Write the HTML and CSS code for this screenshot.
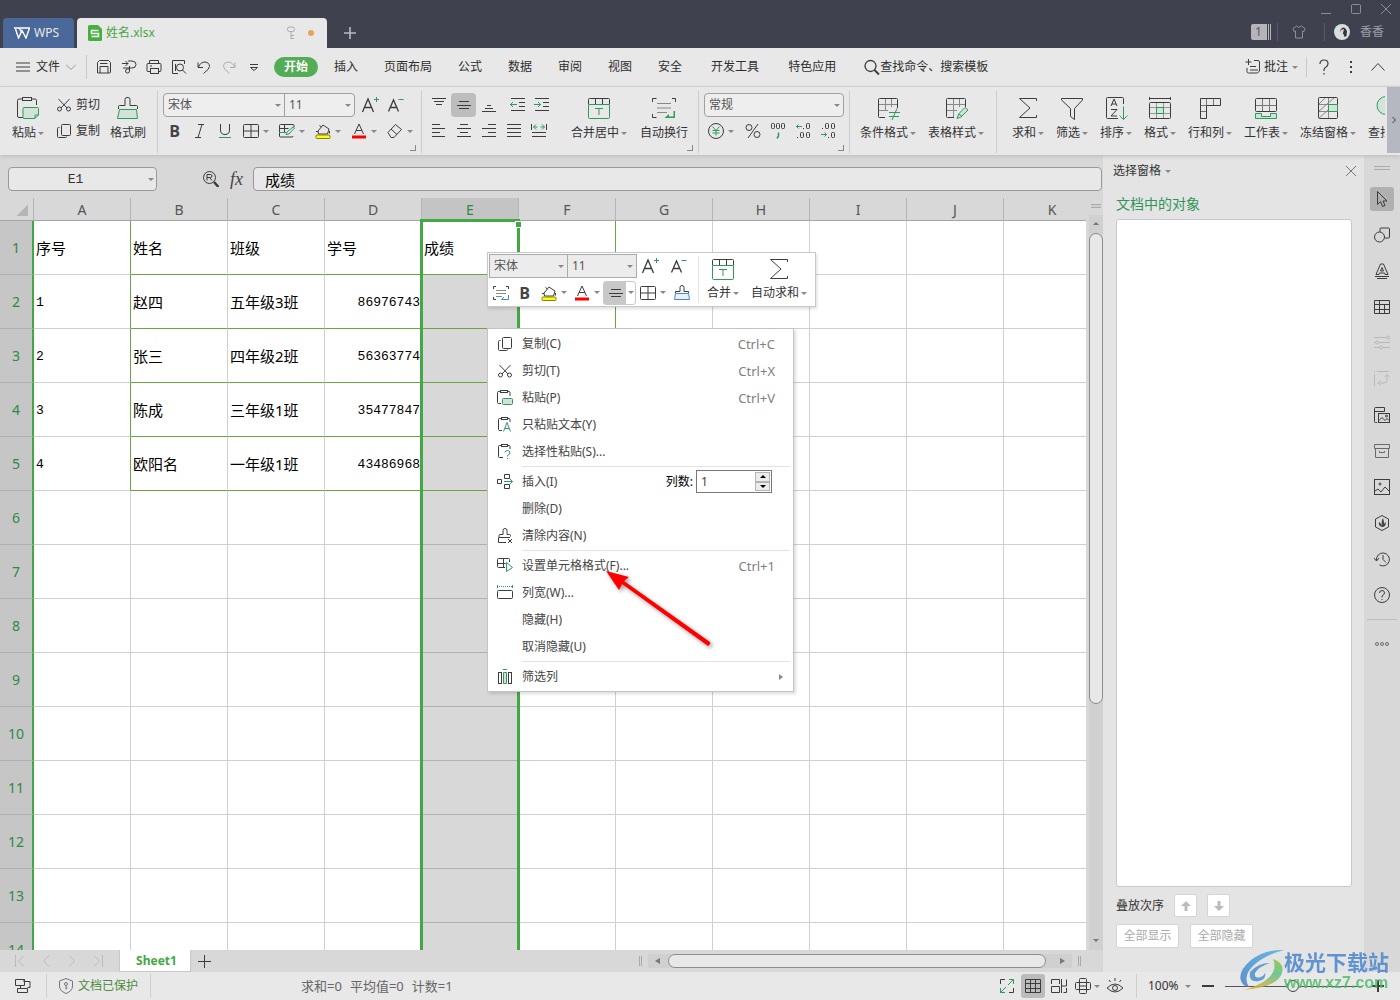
FILE: index.html
```html
<!DOCTYPE html>
<html lang="zh-CN">
<head>
<meta charset="utf-8">
<title>姓名.xlsx - WPS</title>
<link rel="stylesheet" href="styles.css">
</head>
<body>
<svg class="sprite" aria-hidden="true">
  <symbol id="cut" viewBox="0 0 16 16"><path d="M2.500 2l8.500 9M13.500 2L5 11"/><circle cx="3.500" cy="12" r="2"/><circle cx="12.500" cy="12" r="2"/></symbol>
  <symbol id="copy" viewBox="0 0 16 16"><rect x="5.500" y="1.500" width="9" height="11" rx="1"/><path d="M3.500 4.500h-1q-1 0-1 1v8q0 1 1 1h7q1 0 1-1"/></symbol>
  <symbol id="borders" viewBox="0 0 16 16"><rect x=".5" y="1.500" width="15" height="13" rx="1"/><path d="M8 1.500v13M.5 8h15"/></symbol>
  <symbol id="bucket" viewBox="0 0 16 16"><path d="M3 8l5-6 6 4-1.500 5h-9zM1 8.500h2M4.500 2.500l2 1.500M14.500 8v2.500"/><rect x="1" y="12" width="14" height="3.500" rx="1" fill="#ff0" stroke="#887f22"/></symbol>
  <symbol id="fontcolor" viewBox="0 0 16 16"><path d="M3.500 11L8 1l4.500 10M5 7.500h6"/><path d="M1 14h14" stroke="#f00" stroke-width="3"/></symbol>
  <symbol id="grow" viewBox="0 0 18 18"><path d="M1.500 16L7 3l5.500 13M3.500 11.500h7" stroke-width="1.300"/><path class="g" d="M15.500 1v5M13 3.500h5"/></symbol>
  <symbol id="shrink" viewBox="0 0 18 18"><path d="M2.500 15.500L7.500 4l5 11.500M4 11.500h7" stroke-width="1.300"/><path class="g" d="M12.500 3.500h5"/></symbol>
  <symbol id="merge" viewBox="0 0 24 24"><path d="M1.500 8V3.500q0-1 1-1h19q1 0 1 1V8M8.500 3v5M15.500 3v5"/><path class="g" d="M1.500 8.500v13q0 1 1 1h19q1 0 1-1v-13zM8 12.500h8M12 12.500v6.500"/></symbol>
  <symbol id="wrap" viewBox="0 0 24 24"><path d="M.5 6V2.500h4M20 2.500h3.500V6M.5 18v3.500h4"/><path d="M5 7.500h14M5 12h14M5 16.500h10" stroke="#888"/><path class="gs" d="M21.500 15h1.500v7H12.500l4.500-4v2.500h4.500z"/></symbol>
  <symbol id="sigma" viewBox="0 0 24 24"><path d="M20.500 5V2.500h-17L14 12 3.500 21.500h17V19"/></symbol>
  <symbol id="brush" viewBox="0 0 24 24"><path d="M2.500 13V10.500q0-1 1-1H9v-6q0-2 2-2h1q2 0 2 2v6h6.500q1 0 1 1V13"/><path class="gf" d="M3.500 13.500h17l1 9h-20z"/></symbol>
  <symbol id="more" viewBox="0 0 16 16"><circle cx="3" cy="8" r="1.500"/><circle cx="8" cy="8" r="1.500"/><circle cx="13" cy="8" r="1.500"/></symbol>
</svg>
<div class="app">

<header class="titlebar">
  <button class="wps-tab"><svg width="16" height="12" viewBox="0 0 16 12"><path d="M0 1h15.500L12 11 8 3.500 4.500 11 1.500 2M5 1l3 5" stroke="#fff" stroke-width="1.400"/></svg>WPS</button>
  <div class="doc-tab">
    <svg width="14" height="16" viewBox="0 0 14 16"><path d="M1.500 0H10l4 4v10.500q0 1.500-1.500 1.500h-11Q0 16 0 14.500v-13Q0 0 1.500 0z" fill="#45b03f" stroke="none"/><path d="M10.500 5.500h-7v3h7v3h-7" stroke="#fff" stroke-width="1.500"/></svg>
    <span class="doc-name">姓名.xlsx</span>
    <svg class="key" width="10" height="14" viewBox="0 0 10 14"><rect x="1.500" y="1" width="7" height="4.500" rx="2"/><path d="M5 5.500V13M5 9.500h3M5 12.500h3"/></svg>
    <span class="unsaved"></span>
  </div>
  <button class="new-tab" aria-label="新建"><svg width="12" height="12" viewBox="0 0 12 12"><path d="M6 0v12M0 6h12" stroke="#bbb" stroke-width="1.600"/></svg></button>
  <div class="title-right">
    <div class="win-controls">
      <button aria-label="最小化"><svg width="10" height="10"><path d="M0 9.500h10"/></svg></button>
      <button aria-label="最大化"><svg width="10" height="10"><rect x=".5" y=".5" width="9" height="9" rx="1"/></svg></button>
      <button aria-label="关闭"><svg width="10" height="10"><path d="M0 0l10 10M10 0L0 10"/></svg></button>
    </div>
    <div class="user-row">
      <span class="badge">1</span>
      <button class="skin" aria-label="皮肤"><svg width="14" height="14" viewBox="0 0 14 14"><path d="M4.500 1L1 3.500 2 6.500l1.500-.5v7h7V6l1.500.5 1-3L9.500 1Q7 4 4.500 1z"/></svg></button>
      <svg class="avatar" width="16" height="16" viewBox="0 0 16 16"><circle cx="8" cy="8" r="8" fill="#d5dfe3" stroke="none"/><path d="M6 7q2-5 5-3l2 3-.5 5-2 1-1-3z" fill="#3c3136" stroke="none"/><path d="M7 6l3-1-1 4H6z" fill="#f1d3c5" stroke="none"/></svg>
      <span>香香</span>
    </div>
  </div>
</header>

<nav class="menubar">
  <button class="file"><svg width="14" height="10"><path d="M0 1h14M0 5h14M0 9h14"/></svg>文件<svg width="10" height="6" class="soft"><path d="M0 .5l5 5 5-5"/></svg></button>
  <div class="quick">
    <button aria-label="保存"><svg width="16" height="16"><path d="M1.500 14V3.500l2-2h9l2 2V13q0 1-1 1h-11q-1 0-1-1zM4 4.500h7.500M4 14V7.500h8V14"/></svg></button>
    <button aria-label="输出PDF"><svg width="16" height="16"><path d="M1 4.500h6M4.500 2L7 4.500 4.500 7M7 2h4q4 0 4 3.500T11 9H2M8.500 7v5q0 2-2 2t-2-2 2-2h2"/></svg></button>
    <button aria-label="打印"><svg width="16" height="16"><path d="M3.500 4.500v-3h9v3M4 12.500H2q-1 0-1-1v-6q0-1 1-1h12q1 0 1 1v6q0 1-1 1h-2"/><rect x="4.500" y="9.500" width="8" height="5"/><path d="M4 7h2"/></svg></button>
    <button aria-label="打印预览"><svg width="16" height="16"><path d="M7 14.500H1.500v-13h12V5"/><circle cx="9" cy="8.500" r="3.500"/><path d="M11.500 11l3.500 3.500M4.500 5v7"/></svg></button>
    <button aria-label="撤销"><svg width="16" height="16"><path d="M2 3.500v5h5M2.500 8q2-5 6.500-5 4.500.5 4.500 4.500 0 2.500-6 7"/></svg></button>
    <button class="faint" aria-label="恢复"><svg width="16" height="16"><path d="M14 3.500v5H9M13.500 8q-2-5-6.500-5-4.500.5-4.500 4.500 0 2.500 6 7"/></svg></button>
    <button aria-label="更多"><svg width="16" height="16"><path d="M4 5.500h8M4.500 8.500l3.500 3 3.500-3z"/></svg></button>
  </div>
  <div class="tabs">
    <button class="on">开始</button><button>插入</button><button>页面布局</button><button>公式</button><button>数据</button><button>审阅</button><button>视图</button><button>安全</button><button class="wide">开发工具</button><button class="wide">特色应用</button>
  </div>
  <button class="search"><svg width="16" height="16"><circle cx="6.500" cy="7" r="5.500" stroke-width="1.300"/><path d="M10.500 11l4.500 4.500" stroke-width="2"/></svg>查找命令、搜索模板</button>
  <div class="menu-right">
    <button class="comment"><svg width="16" height="16"><path d="M3.500 0v6M.5 3h6M9 1.500h4q1.500 0 1.500 1.500v9l-2 2h-9q-1.500 0-1.500-1.500V9M5 7.500h6M5 11h8"/></svg>批注<i class="caret"></i></button>
    <button class="ic" aria-label="帮助"><svg width="12" height="16"><path d="M2 5q0-4 4-4t4 3.500Q10 7 8 8T6 11v1M6 14v1.500" stroke-width="1.200"/></svg></button>
    <button class="ic" aria-label="选项"><svg width="4" height="14"><path d="M2 1v2M2 6v2M2 11v2" stroke-width="2"/></svg></button>
    <button class="ic" aria-label="折叠"><svg width="14" height="8"><path d="M.5 7.500l6.500-7 6.500 7"/></svg></button>
  </div>
</nav>

<section class="ribbon">
  <div class="group g-clip">
    <button class="big"><svg width="24" height="24"><path d="M7 21.500H3q-1.500 0-1.500-1.500V4.500Q1.500 3 3 3h3M16 3h3q1.500 0 1.500 1.500V9"/><rect x="6.500" y="1.500" width="9" height="3"/><path class="gf" d="M8 11.500h13.500q1 0 1 1V19l-3.500 3.500H8q-1 0-1-1v-9q0-1 1-1zM19 22v-3h3"/></svg><span>粘贴<i class="caret"></i></span></button>
    <div class="stack">
      <button class="lbl"><svg width="16" height="16"><use href="#cut"/></svg>剪切</button>
      <button class="lbl"><svg width="16" height="16"><use href="#copy"/></svg>复制</button>
    </div>
    <button class="big"><svg width="24" height="24"><use href="#brush"/></svg><span>格式刷</span></button>
  </div>
  <div class="group g-font launch">
    <div class="line">
      <div class="combo">
        <label class="pick w-font"><select aria-label="字体"><option>宋体</option></select><i class="caret"></i></label>
        <label class="pick w-size"><select aria-label="字号"><option>11</option></select><i class="caret"></i></label>
      </div>
      <button class="ib ga" aria-label="增大字号"><svg width="18" height="18"><use href="#grow"/></svg></button>
      <button class="ib" aria-label="减小字号"><svg width="18" height="18"><use href="#shrink"/></svg></button>
    </div>
    <div class="line">
      <button class="ib bold">B</button><button class="ib" aria-label="斜体"><svg width="12" height="14"><path d="M4 .5h6M1 13.500h6M8 .5l-4 13"/></svg></button><button class="ib" aria-label="下划线"><svg width="14" height="16"><path d="M2.500 1v6q0 4.500 4.500 4.500T11.500 7V1"/><path class="g" d="M1 14.500h12"/></svg></button>
      <button class="split first" aria-label="边框"><svg width="16" height="16"><use href="#borders"/></svg><i class="caret"></i></button>
      <button class="split" aria-label="单元格样式"><svg width="16" height="16"><path d="M15 4V2.500q0-1-1-1H1.500q-1 0-1 1V13q0 1 1 1H13q1 0 1-1M.5 5.500h9M5.500 2v8"/><path class="g" d="M0 9.500h7M15.500 5L10 11l-3 .5L8 9l6-5z"/></svg><i class="caret"></i></button>
      <button class="split" aria-label="填充颜色"><svg width="16" height="16"><use href="#bucket"/></svg><i class="caret"></i></button>
      <button class="split" aria-label="字体颜色"><svg width="16" height="16"><use href="#fontcolor"/></svg><i class="caret"></i></button>
      <button class="split" aria-label="清除"><svg width="16" height="16"><path d="M1 9.500l7.500-8 6 5-7.500 8H4zM4 6l6 5.500"/></svg><i class="caret"></i></button>
    </div>
  </div>
  <div class="group g-align launch">
    <div class="stack">
      <div class="line">
        <button class="ib" aria-label="顶端对齐"><svg width="16" height="16"><path d="M1 1.500h14M3 4.500h10M5 7.500h6"/></svg></button>
        <button class="ib on" aria-label="垂直居中"><svg width="16" height="16"><path d="M3 4.500h10M1 8.500h14M3 11.500h10"/></svg></button>
        <button class="ib" aria-label="底端对齐"><svg width="16" height="16"><path d="M6 8.500h4M4 11.500h8M1 14.500h14"/></svg></button>
        <button class="ib wide" aria-label="减少缩进"><svg width="16" height="16"><path d="M2 1.500h14M10 5.500h6M10 9.500h6M2 13.500h14"/><path class="g" d="M1 7.500h7M4 5L1.500 7.500 4 10"/></svg></button>
        <button class="ib" aria-label="增加缩进"><svg width="16" height="16"><path d="M1 1.500h14M9 5.500h6M9 9.500h6M1 13.500h14"/><path class="g" d="M0 7.500h6.500M4 5l2.500 2.500L4 10"/></svg></button>
      </div>
      <div class="line">
        <button class="ib" aria-label="左对齐"><svg width="16" height="16"><path d="M1 1.500h8M1 5.500h13M1 9.500h8M1 13.500h13"/></svg></button>
        <button class="ib" aria-label="居中"><svg width="16" height="16"><path d="M4 1.500h8M1 5.500h14M4 9.500h8M1 13.500h14"/></svg></button>
        <button class="ib" aria-label="右对齐"><svg width="16" height="16"><path d="M7 1.500h8M1 5.500h14M7 9.500h8M1 13.500h14"/></svg></button>
        <button class="ib" aria-label="两端对齐"><svg width="16" height="16"><path d="M1 1.500h14M1 5.500h14M1 9.500h14M1 13.500h14"/></svg></button>
        <button class="ib" aria-label="分散对齐"><svg width="16" height="16"><path d="M.5 1v6M15.500 1v6M1 9.500h14M1 13.500h14"/><path class="g" d="M2.500 4h4M9.500 4h4M5 1.500L2.500 4 5 6.500M11 1.500L13.500 4 11 6.500"/></svg></button>
      </div>
    </div>
    <button class="big"><svg width="24" height="24"><use href="#merge"/></svg><span>合并居中<i class="caret"></i></span></button>
    <button class="big"><svg width="24" height="24"><use href="#wrap"/></svg><span>自动换行</span></button>
  </div>
  <div class="group g-num launch">
    <div class="line"><div class="combo"><label class="pick w-num"><select aria-label="数字格式"><option>常规</option></select><i class="caret"></i></label></div></div>
    <div class="line">
      <button class="split" aria-label="货币"><svg width="16" height="16"><circle cx="8" cy="8" r="7.500"/><path class="g" d="M4.500 3.500L8 7.500l3.500-4M8 7.500v5M4.500 7.500h7M4.500 10h7"/></svg><i class="caret"></i></button>
      <button class="ib" aria-label="百分比"><svg width="16" height="16"><circle cx="4" cy="4.500" r="3"/><circle cx="12" cy="11.500" r="3"/><path d="M13 1L3 15"/></svg></button>
      <button class="ib" aria-label="千位分隔"><svg width="16" height="16"><rect x="1.500" y=".5" width="3" height="5" rx="1"/><rect x="6.500" y=".5" width="3" height="5" rx="1"/><rect x="11.500" y=".5" width="3" height="5" rx="1"/><path class="g" d="M8.500 9.500v3.500L7 15.500" stroke-width="1.500"/></svg></button>
      <button class="ib" aria-label="增加小数"><svg width="16" height="16"><rect x="11.500" y=".5" width="3" height="5" rx="1"/><rect x="5.500" y="9.500" width="3" height="5" rx="1"/><rect x="11.500" y="9.500" width="3" height="5" rx="1"/><path d="M8 5.500h1M2 14.500h1"/><path class="g" d="M1 3.500h6M3.500 1.500l-2 2 2 2"/></svg></button>
      <button class="ib" aria-label="减少小数"><svg width="16" height="16"><rect x="5.500" y=".5" width="3" height="5" rx="1"/><rect x="11.500" y=".5" width="3" height="5" rx="1"/><rect x="11.500" y="9.500" width="3" height="5" rx="1"/><path d="M2 5.500h1M8 14.500h1"/><path class="g" d="M1 11.500h6M4.500 9.500l2 2-2 2"/></svg></button>
    </div>
  </div>
  <div class="group g-style">
    <button class="big"><svg width="24" height="24"><path d="M9 21.500H3.500q-1 0-1-1v-17q0-1 1-1h17q1 0 1 1V12"/><path d="M3 8.500h18M3 14.500h9M9.500 3v11.500M15.500 3v8" stroke="#888"/><path class="g" d="M13 16.500h11M13 20.500h10M21 12.500L16 24"/></svg><span>条件格式<i class="caret"></i></span></button>
    <button class="big"><svg width="24" height="24"><path d="M10 21.500H3.500q-1 0-1-1v-17q0-1 1-1h17q1 0 1 1V11"/><path d="M3 8.500h18M3 14.500h10M9.500 3v18M15.500 3v8" stroke="#888"/><path class="gf" d="M13 22.500l2-5 6-6 3 2.500-7 7zM15 18l3 2.500"/></svg><span>表格样式<i class="caret"></i></span></button>
  </div>
  <div class="group g-edit">
    <button class="big"><svg width="24" height="24"><use href="#sigma"/></svg><span>求和<i class="caret"></i></span></button>
    <button class="big"><svg width="24" height="24"><path d="M1.500 2.500h21V4l-8 8.500v11l-4-3v-8L1.500 4z"/></svg><span>筛选<i class="caret"></i></span></button>
    <button class="big"><svg width="24" height="24"><path d="M14 22.500H3.500q-1 0-1-1v-19q0-1 1-1h15q1 0 1 1V8M7 10l3-7 3 7M8 8h4M7 13.500h6l-6 6.500h6"/><path class="g" d="M19.500 10.500v13M15.500 19.500l4 4 4-4"/></svg><span>排序<i class="caret"></i></span></button>
    <button class="big"><svg width="24" height="24"><path d="M1 2.500h22M1.500 1v3M22.500 1v3"/><rect x="1.500" y="6.500" width="21" height="16" rx="1"/><path d="M2 11.500h20M2 17.500h20M8.500 7v15M15.500 7v15" stroke="#999"/><rect class="gf" x="8.500" y="11.500" width="7" height="6"/></svg><span>格式<i class="caret"></i></span></button>
    <button class="big"><svg width="24" height="24"><path d="M2.500 2.500h20v7H8.500v13h-6z"/><path d="M3 9.500h5M8.500 3v6M15.500 3v6M3 15.500h5" stroke="#777"/></svg><span>行和列<i class="caret"></i></span></button>
    <button class="big"><svg width="24" height="24"><rect x="1.500" y="2.500" width="21" height="13" rx="1"/><path d="M2 9.500h20M8.500 3v12M15.500 3v12" stroke="#777"/><path class="gf" d="M1.500 17.500h6v3h9v-3h6v5h-21z"/></svg><span>工作表<i class="caret"></i></span></button>
    <button class="big"><svg width="24" height="24"><path d="M3 8.500h18M3 15.500h18M12.500 2v20M3 8l6-6M3 15L18 2M3 22l16-14" stroke="#888"/><rect x="2.500" y="1.500" width="19" height="21" rx="1"/><rect class="gf" x="12.500" y="8.500" width="9" height="7"/></svg><span>冻结窗格<i class="caret"></i></span></button>
    <button class="big"><svg width="24" height="24"><circle class="gf" cx="14" cy="9.500" r="9"/><path d="M19 16l5 6"/></svg><span>查找<i class="caret"></i></span></button>
  </div>
  <button class="ribbon-next" aria-label="更多"><svg width="4" height="8"><path d="M.5 1l3 3-3 3"/></svg></button>
</section>

<main>
  <div class="workspace">
    <div class="formula">
      <label class="namebox"><input value="E1" aria-label="名称框"><i class="caret"></i></label>
      <div class="fx">
        <svg width="16" height="16"><circle cx="6.500" cy="6.500" r="6"/><path d="M11 11l4.500 5" stroke-width="2.500"/><path d="M4 9.500v-6h3.500q1.500 0 1.500 1.500T7.500 6.500H4M7 7l2 2.500"/></svg>
        <em>fx</em>
      </div>
      <input class="cell-input" value="成绩" aria-label="编辑栏">
    </div>
    <div class="sheet-area">
      <div class="sheet">
        <table>
          <thead><tr><th class="corner"></th><th>A</th><th>B</th><th>C</th><th>D</th><th class="sel">E</th><th>F</th><th>G</th><th>H</th><th>I</th><th>J</th><th>K</th></tr></thead>
          <tbody>
          <tr class="data"><th>1</th><td>序号</td><td>姓名</td><td>班级</td><td>学号</td><td>成绩</td><td></td><td></td><td></td><td></td><td></td><td></td></tr>
          <tr class="data"><th>2</th><td class="num">1</td><td>赵四</td><td>五年级3班</td><td class="num r">86976743</td><td></td><td></td><td></td><td></td><td></td><td></td><td></td></tr>
          <tr class="data"><th>3</th><td class="num">2</td><td>张三</td><td>四年级2班</td><td class="num r">56363774</td><td></td><td></td><td></td><td></td><td></td><td></td><td></td></tr>
          <tr class="data"><th>4</th><td class="num">3</td><td>陈成</td><td>三年级1班</td><td class="num r">35477847</td><td></td><td></td><td></td><td></td><td></td><td></td><td></td></tr>
          <tr class="data"><th>5</th><td class="num">4</td><td>欧阳名</td><td>一年级1班</td><td class="num r">43486968</td><td></td><td></td><td></td><td></td><td></td><td></td><td></td></tr>
          <tr><th>6</th><td></td><td></td><td></td><td></td><td></td><td></td><td></td><td></td><td></td><td></td><td></td></tr>
          <tr><th>7</th><td></td><td></td><td></td><td></td><td></td><td></td><td></td><td></td><td></td><td></td><td></td></tr>
          <tr><th>8</th><td></td><td></td><td></td><td></td><td></td><td></td><td></td><td></td><td></td><td></td><td></td></tr>
          <tr><th>9</th><td></td><td></td><td></td><td></td><td></td><td></td><td></td><td></td><td></td><td></td><td></td></tr>
          <tr><th>10</th><td></td><td></td><td></td><td></td><td></td><td></td><td></td><td></td><td></td><td></td><td></td></tr>
          <tr><th>11</th><td></td><td></td><td></td><td></td><td></td><td></td><td></td><td></td><td></td><td></td><td></td></tr>
          <tr><th>12</th><td></td><td></td><td></td><td></td><td></td><td></td><td></td><td></td><td></td><td></td><td></td></tr>
          <tr><th>13</th><td></td><td></td><td></td><td></td><td></td><td></td><td></td><td></td><td></td><td></td><td></td></tr>
          <tr><th>14</th><td></td><td></td><td></td><td></td><td></td><td></td><td></td><td></td><td></td><td></td><td></td></tr>
          </tbody>
        </table>
        <div class="selection"></div>
      </div>
      <div class="vscroll"><span class="grip"></span><i class="arrow up"></i><span class="thumb"></span><i class="arrow down"></i></div>
    </div>
    <div class="sheetbar">
      <div class="sheet-nav">
        <button aria-label="第一张"><svg width="10" height="12"><path d="M.5 0v12M9 .5L3.500 6 9 11.500"/></svg></button>
        <button aria-label="上一张"><svg width="10" height="12"><path d="M8 .5L2.500 6 8 11.500"/></svg></button>
        <button aria-label="下一张"><svg width="10" height="12"><path d="M2 .5L7.500 6 2 11.500"/></svg></button>
        <button aria-label="最后一张"><svg width="10" height="12"><path d="M9.500 0v12M1 .5L6.500 6 1 11.500"/></svg></button>
      </div>
      <button class="sheet-tab">Sheet1</button>
      <button class="add" aria-label="新建工作表"><svg width="13" height="13"><path d="M6.500 0v13M0 6.500h13"/></svg></button>
      <div class="hscroll"><span class="vgrip"></span><div class="track"><i class="arrow left"></i><span class="thumb"></span><i class="arrow right"></i></div><span class="vgrip"></span></div>
    </div>
  </div>

  <aside class="pane">
    <div class="pane-title"><span>选择窗格<i class="caret"></i></span><button aria-label="关闭"><svg width="10" height="10"><path d="M0 0l10 10M10 0L0 10"/></svg></button></div>
    <h2>文档中的对象</h2>
    <div class="objects"></div>
    <div class="order"><span>叠放次序</span>
      <button aria-label="上移"><svg width="10" height="10"><path d="M5 0l5 5H6.500v5h-3V5H0z"/></svg></button>
      <button aria-label="下移"><svg width="10" height="10"><path d="M5 10l5-5H6.500V0h-3v5H0z"/></svg></button>
    </div>
    <div class="show"><button>全部显示</button><button>全部隐藏</button></div>
  </aside>

  <nav class="side">
    <span class="grip"></span>
    <button class="on" aria-label="选择"><svg width="16" height="16"><path d="M3.500.5v13l3-3 2 5 2.500-1-2-4.500h4z"/></svg></button>
    <button aria-label="形状"><svg width="16" height="16"><path d="M6 5V2q0-1 1-1h7.500q1 0 1 1v8q0 1-1 1H11"/><circle cx="5.500" cy="10" r="5"/></svg></button>
    <button aria-label="艺术字"><svg width="16" height="16"><path d="M2 11.500L6.500 1h3L14 11.500h-3l-.5-1.500h-5L5 11.500zM8 4.500L6.500 8h3zM1 13.500h14M3 15.500h10"/></svg></button>
    <button aria-label="表格"><svg width="16" height="16"><path d="M.5 1.500h15v13H.5zM.5 5.500h15M.5 10.500h15M5.500 1.500v13M10.500 5.500v9"/></svg></button>
    <button class="faint" aria-label="属性"><svg width="16" height="16"><path d="M0 2.500h12M0 7.500h1M5 7.500h11M0 12.500h5M9 12.500h7"/><circle cx="14" cy="2.500" r="1.500"/><circle cx="3" cy="7.500" r="1.500"/><circle cx="7" cy="12.500" r="1.500"/></svg></button>
    <button class="faint" aria-label="分析"><svg width="16" height="16"><path d="M.5 3v12M3 .5h12M0 .5h1M4 12h6q3 0 3-3V4M10.500 6L13 3.500 15.500 6M6.500 9.500L4 12l2.500 2.500"/></svg></button>
    <button aria-label="素材"><svg width="16" height="16"><path d="M3 15.500H1.500q-1 0-1-1V1.500q0-1 1-1h9v4M.5 4.500h10"/><rect x="4.500" y="6.500" width="11" height="9"/><path d="M5 13.500l3-3 3 3 2-2 2 2"/><circle cx="12.500" cy="9" r="1"/></svg></button>
    <button class="mid" aria-label="备份"><svg width="16" height="16"><path d="M.5 1.500h15v4H.5zM1.500 5.500h13v9h-13zM5.500 8v1.500h5V8"/></svg></button>
    <button aria-label="图片"><svg width="16" height="16"><rect x=".5" y=".5" width="15" height="15"/><circle cx="6" cy="5" r="1"/><path d="M1 12l3-2 3 3 4-5 4 4"/></svg></button>
    <button aria-label="推荐"><svg width="16" height="16"><path d="M8 .5l6.500 3.500v8L8 15.500 1.500 12V4z"/><path d="M8 12Q4 11 5 7q2 1 3 4Q7 6 9 3q2 5 0 8 0-2 3-4 0 5-4 5z" fill="#444" stroke="none"/></svg></button>
    <button aria-label="历史"><svg width="16" height="16"><path d="M2.500 9.500a6.500 6.500 0 1 1 3 4.500M0 7l2.500 3L5 7M9 4v4.500l3 3"/></svg></button>
    <button aria-label="帮助"><svg width="16" height="16"><circle cx="8" cy="8" r="7.500"/><path d="M5.500 6q0-2.500 2.500-2.500T10.500 6Q10.500 7.500 8 9v1.500M8 12v1"/></svg></button>
    <hr>
    <button class="mid" aria-label="更多"><svg width="16" height="16"><use href="#more"/></svg></button>
  </nav>
</main>

<footer class="status">
  <button class="st-mode" aria-label="模式"><svg width="16" height="16"><path d="M.5 1.500h9v6h-9zM9.500 3.500H15v6h-2.500M5.500 7.500v3M2.500 10.500h10v4h-10zM9 1v3"/></svg></button>
  <button class="st-doc"><svg width="14" height="16"><path d="M7 .5l6.500 2.500v5Q13.500 13 7 15.500.5 13 .5 8V3z"/><circle cx="7" cy="6" r="1.500"/><path d="M7 7.500v4M7 10h1.500"/></svg>文档已保护</button>
  <span class="calc"><span>求和=0</span><span>平均值=0</span><span>计数=1</span></span>
  <div class="views">
    <button aria-label="全屏"><svg width="16" height="16"><path d="M1.500 6V1.500H6M14.500 10v4.500H10"/><path class="g" d="M9 7l5.500-5.500M10 1.500h4.500V6M7 9l-5.500 5.500M1.500 10v4.500H6"/></svg></button>
    <button class="on" aria-label="普通"><svg width="16" height="16"><path d="M.5 1.500h15v13H.5zM.5 5.500h15M.5 10.500h15M5.500 1.500v13M10.500 1.500v13"/></svg></button>
    <button aria-label="分页预览"><svg width="16" height="16"><path d="M.5 6V1.500h8V6M.5 8.500h8v6h-8zM10.500 1v14M15.500 1.500V8h-5M15.500 10v4.500h-3"/></svg></button>
    <button aria-label="阅读"><svg width="16" height="16"><rect x="4.500" y=".5" width="7" height="15" rx="1"/><rect x=".5" y="4.500" width="15" height="7" rx="1"/><path d="M4.500 8h7"/></svg><i class="caret"></i></button>
    <button aria-label="护眼"><svg width="18" height="18"><path d="M1 11q8-8 16 0-8 8-16 0zM9 1v3M3 3l1.500 2M15 3l-1.500 2"/><circle cx="9" cy="11" r="2.500"/></svg></button>
  </div>
  <div class="zoom">
    <button class="pct">100%<i class="caret"></i></button>
    <button aria-label="缩小"><svg width="12" height="12"><path d="M0 6h12" stroke-width="2"/></svg></button>
    <input type="range" min="0" max="100" value="50" aria-label="缩放">
    <button aria-label="放大"><svg width="12" height="12"><path d="M0 6h12M6 0v12" stroke-width="2"/></svg></button>
  </div>
</footer>
</div>

<div class="mini">
  <div class="mini-left">
    <div class="line">
      <label class="pick w-mf"><select aria-label="字体"><option>宋体</option></select><i class="caret"></i></label>
      <label class="pick w-ms"><select aria-label="字号"><option>11</option></select><i class="caret"></i></label>
      <button class="ib" aria-label="增大字号"><svg width="18" height="18"><use href="#grow"/></svg></button>
      <button class="ib ga" aria-label="减小字号"><svg width="18" height="18"><use href="#shrink"/></svg></button>
    </div>
    <div class="line">
      <button class="ib" aria-label="自动换行"><svg class="blue" width="16" height="16"><path d="M.5 4V1.500H3M13 1.500h2.500V4M.5 12v2.500H3"/><path d="M3 5.500h10M3 8.500h10M3 11.500h6" stroke="#888"/><path class="g" d="M15.500 10v4.500H8.500M11 12l-2.500 2.500"/></svg></button>
      <button class="ib bold">B</button>
      <button class="split" aria-label="填充颜色"><svg width="16" height="16"><use href="#bucket"/></svg><i class="caret"></i></button>
      <button class="split" aria-label="字体颜色"><svg width="16" height="16"><use href="#fontcolor"/></svg><i class="caret"></i></button>
      <button class="split on" aria-label="居中"><svg width="16" height="16"><path d="M3 4.500h10M1 8.500h14M3 11.500h10"/></svg><i class="caret"></i></button>
      <button class="split" aria-label="边框"><svg width="16" height="16"><use href="#borders"/></svg><i class="caret"></i></button>
      <button class="ib" aria-label="格式刷"><svg width="16" height="16"><path d="M1.500 8V6.500H6v-4q0-2 2-2t2 2v4h4.500V8"/><path d="M1.500 8.500h13l1 6H.5z" stroke="#4a86d8" fill="#e8f0fb"/></svg></button>
    </div>
  </div>
  <div class="mini-right">
    <button class="big"><svg width="24" height="24"><use href="#merge"/></svg><span>合并<i class="caret"></i></span></button>
    <button class="big"><svg width="24" height="24"><use href="#sigma"/></svg><span>自动求和<i class="caret"></i></span></button>
  </div>
</div>

<div class="context">
  <button class="mi"><svg width="16" height="16"><use href="#copy"/></svg><span>复制(C)</span><kbd>Ctrl+C</kbd></button>
  <button class="mi"><svg width="16" height="16"><use href="#cut"/></svg><span>剪切(T)</span><kbd>Ctrl+X</kbd></button>
  <button class="mi"><svg width="16" height="16"><path d="M4 13.500H1.500q-1 0-1-1v-10q0-1 1-1H3M11 1.500h1q1 0 1 1V6"/><rect x="3.500" y=".5" width="7" height="2"/><rect class="gf" x="5.500" y="8.500" width="10" height="6" rx="1"/></svg><span>粘贴(P)</span><kbd>Ctrl+V</kbd></button>
  <button class="mi"><svg width="16" height="16"><path d="M5 13.500H2.500q-1 0-1-1v-10q0-1 1-1H4M11 1.500h1q1 0 1 1V5"/><rect x="4.500" y=".5" width="6" height="2"/><path class="g" d="M6.500 14.500l3.500-9 3.500 9M8 11.500h4"/></svg><span>只粘贴文本(Y)</span></button>
  <button class="mi"><svg width="16" height="16"><path d="M6 13.500H2.500q-1 0-1-1v-10q0-1 1-1H4M11 1.500h1q1 0 1 1V5"/><rect x="4.500" y=".5" width="6" height="2"/><path class="g" d="M8 8.500Q8 6.500 10.500 6.500T13 9q0 1.500-2.500 2.500v1M10.500 14v1"/></svg><span>选择性粘贴(S)...</span></button>
  <hr>
  <div class="mi insert"><button><svg width="16" height="16"><path d="M.5 5.500h4v4h-4zM7.500.5h5v4h-5zM7.500 10.500h5v4h-5z"/><path class="g" d="M7 7.500h8.500M13 5l2.500 2.500L13 10"/></svg><span>插入(I)</span></button><label for="cols">列数:</label><div class="spin"><input id="cols" value="1"><span><button aria-label="增加"><i class="tri up"></i></button><button aria-label="减少"><i class="tri"></i></button></span></div></div>
  <button class="mi"><svg width="16" height="16"></svg><span>删除(D)</span></button>
  <button class="mi"><svg width="16" height="16"><path d="M13.500 8.500v-1q0-1-1-1H10v-4q0-2-2-2t-2 2v4H3q-1 0-1 1v2M2 9.500h11M1.500 9.500v5H9M11 11l4 4M15 11l-4 4"/></svg><span>清除内容(N)</span></button>
  <hr>
  <button class="mi"><svg width="16" height="16"><path d="M8 9.500H1.500q-1 0-1-1v-7q0-1 1-1h10q1 0 1 1V4M.5 5.500h8M6.500.5v9"/><path class="g" d="M9.500 4.500v9l6-4z"/></svg><span>设置单元格格式(F)...</span><kbd>Ctrl+1</kbd></button>
  <button class="mi"><svg width="16" height="16"><rect x=".5" y="5.500" width="15" height="8" rx="1"/><path class="g" d="M0 1.500h16" stroke-dasharray="1 1"/><path class="g" d="M.5 0v3M15.500 0v3"/></svg><span>列宽(W)...</span></button>
  <button class="mi"><svg width="16" height="16"></svg><span>隐藏(H)</span></button>
  <button class="mi"><svg width="16" height="16"></svg><span>取消隐藏(U)</span></button>
  <hr>
  <button class="mi"><svg width="16" height="16"><rect x="1.500" y="3.500" width="3" height="11"/><rect x="11.500" y="3.500" width="3" height="11"/><path class="gf" d="M6.500 3.500h3v11h-3z"/><path class="g" d="M6 .5h4"/></svg><span>筛选列</span><i class="sub"></i></button>
</div>

<svg class="pointer" width="112" height="84" viewBox="0 0 112 84"><path d="M4 5l23 6-5 4 86 61q1 2-2 4L20 18l-3 6z" fill="#f00" stroke="none"/></svg>

<div class="mark">
  <svg width="46" height="44" viewBox="0 0 46 44"><defs><linearGradient id="sw" x1="0" x2="0" y1="0" y2="1"><stop offset="0" stop-color="#8cc63f"/><stop offset=".5" stop-color="#5fc08a"/><stop offset="1" stop-color="#e8b030"/></linearGradient><linearGradient id="sb" x1="1" x2="0" y1="0" y2="1"><stop offset="0" stop-color="#4cb4e4"/><stop offset="1" stop-color="#4a80c8"/></linearGradient></defs>
  <path d="M44 1Q26 0 11 11-4 24 2 34q2 3 7 4Q2 27 14 16 25 6 44 1z" fill="url(#sb)" stroke="none"/><path d="M10 23q8-9 20-9Q18 18 15 24q-1 6 6 4 4-2 4-5 2 7-6 9-11 2-9-9z" fill="#4a90d0" stroke="none"/><path d="M33 10q12 4 9 14Q38 38 4 41q24-7 29-18 3-7 0-13z" fill="url(#sw)" stroke="none"/></svg>
  <div><strong>极光下载站</strong><b>www.xz7.com</b></div>
</div>
</body>
</html>
```
FILE: styles.css
```css
* { box-sizing: border-box; }
body {
  margin: 0;
  position: relative;
  font: 12px/16px "Noto Sans", "Noto Sans CJK SC", sans-serif;
  color: #333;
  overflow: hidden;
  --accent: #2c9b5c;
}
button, input, select { font: inherit; color: inherit; }
button { background: none; border: 0; padding: 0; margin: 0; display: flex; align-items: center; justify-content: center; white-space: nowrap; }
input, select { border: 0; background: none; padding: 0; margin: 0; outline: 0; min-width: 0; }
select { appearance: none; }
svg { fill: none; stroke: #3c3c3c; stroke-width: 1; flex: none; display: block; }
.sprite { position: absolute; width: 0; height: 0; }
.g { stroke: var(--accent); }
.gs { fill: var(--accent); stroke: none; }
.gf { stroke: var(--accent); fill: #d3e3d9; }
.blue { --accent: #4a86d8; }
i { flex: none; }
.caret { display: inline-block; width: 0; height: 0; border: 3px solid transparent; border-top: 3px solid #888; border-bottom: 0; }

.app { height: 100vh; display: flex; flex-direction: column; background: #e8e8e8; }

/* title bar */
.titlebar { height: 48px; flex: none; display: flex; align-items: flex-end; background: #3f424e; padding-left: 3px; }
.wps-tab { height: 30px; width: 71px; gap: 4px; background: #4a6899; color: #e8e8e8; border-radius: 4px 4px 0 0; margin-right: 3px; padding-right: 4px; }
.doc-tab { height: 30px; width: 250px; display: flex; align-items: center; background: #e8e8e8; border-radius: 4px 4px 0 0; padding: 0 13px 0 11px; }
.doc-name { color: #45a743; margin-left: 4px; flex: 1; }
.key { stroke: #aaa; }
.unsaved { width: 6px; height: 6px; border-radius: 3px; background: #e8a25c; margin-left: 12px; }
.new-tab { width: 46px; height: 30px; }
.title-right { margin-left: auto; align-self: stretch; display: flex; flex-direction: column; align-items: flex-end; }
.win-controls { display: flex; gap: 20px; height: 18px; padding-right: 9px; }
.win-controls svg, .skin svg { stroke: #8c8e96; }
.user-row { display: flex; align-items: center; height: 28px; color: #9a9ca5; padding-right: 16px; }
.user-row .badge { width: 22px; height: 16px; color: #555; background: linear-gradient(90deg, #b5b5b9 16px, #3f424e 16px 17px, #b5b5b9 17px 18px, #3f424e 18px 19px, #b5b5b9 19px 20px, #3f424e 20px); padding-left: 4px; margin-right: 4px; border-radius: 2px 0 0 2px; }
.skin { width: 48px; height: 18px; border: 1px solid #585b66; border-width: 0 1px; margin-right: 9px; padding-right: 3px; }
.avatar { margin-right: 10px; }

/* menu bar */
.menubar { height: 39px; flex: none; display: flex; align-items: center; border-bottom: 1px solid #d6d6d6; color: #2e2e2e; }
.file { width: 87px; height: 24px; gap: 6px; padding-left: 6px; border-right: 1px solid #c8c8c8; }
.file .soft { stroke: #999; }
.quick { display: flex; padding-left: 4px; }
.quick button { width: 25px; height: 24px; }
.faint { opacity: .35; }
.tabs { display: flex; gap: 26px; align-items: center; padding-left: 8px; }
.tabs .on { width: 44px; height: 20px; border-radius: 10px; background: #54ad56; color: #fff; font-weight: bold; margin-right: -10px; }
.tabs .wide { margin-left: 3px; }
.search { margin-left: 28px; }
.menu-right { margin-left: auto; display: flex; align-items: center; padding-right: 9px; }
.comment { gap: 4px; height: 20px; padding-right: 8px; border-right: 1px solid #c8c8c8; margin-right: 3px; }
.comment svg { margin-right: -1px; }
.menu-right .ic { width: 27px; height: 24px; }

/* ribbon */
.ribbon { height: 68px; flex: none; display: flex; overflow: hidden; padding: 4px 0 2px; position: relative; box-shadow: 0 1px 4px #bbb; z-index: 1; background: #e8e8e8; }
.group { display: flex; border-right: 1px solid #ccc; position: relative; flex: none; }
.g-edit.group { border: 0; }
.launch::after { content: ""; position: absolute; right: 5px; bottom: 2px; width: 5px; height: 5px; border: 1px solid #888; border-width: 0 1px 1px 0; }
.big { flex-direction: column; justify-content: flex-start; padding-top: 5px; gap: 5px; }
.big span { display: flex; align-items: center; gap: 2px; }
.stack, .g-font, .g-num { display: flex; flex-direction: column; }
.line { display: flex; align-items: center; height: 26px; }
.ib { width: 25px; height: 24px; flex: none; }
.ib.on { background: #bdbdbd; border-radius: 4px; }
.bold { font: bold 16px/24px "Open Sans", sans-serif; color: #444; }
.split { width: 36px; height: 24px; padding-left: 4px; gap: 4px; justify-content: flex-start; }
.split.first { margin-left: 2px; }
.g-clip { width: 158px; padding-left: 12px; }
.g-clip .stack { margin: 1px 10px 0 12px; }
.lbl { height: 26px; gap: 4px; }
.g-font { width: 264px; padding: 1px 0 0 5px; }
.g-font .bold { margin-left: -1px; }
.g-font .ga { margin-left: 2px; }
.combo { display: flex; height: 24px; border: 1px solid #a0a0a0; border-radius: 4px; background: #eee; }
.pick { display: flex; align-items: center; padding: 0 3px 0 4px; color: #555; }
.pick select { flex: 1; }
.w-font { width: 121px; border-right: 1px solid #a0a0a0; }
.w-size { width: 69px; }
.w-num { width: 138px; }
.g-align { width: 277px; padding: 1px 0 0 4px; }
.g-align .big { padding-top: 4px; }
.g-align .wide { margin-left: 3px; }
.g-align .stack { margin-right: 17px; }
.g-align .big + .big { margin-left: 13px; }
.g-num { width: 151px; padding: 1px 0 0 5px; }
.g-style, .g-edit { gap: 12px; }
.g-style { width: 147px; padding-left: 10px; }
.g-edit { padding-left: 15px; }
.ribbon-next { position: absolute; right: 0; top: 0; bottom: 2px; width: 13px; background: #b5b8c0; box-shadow: -2px 0 #e8e8e8; }

/* workspace */
main { flex: 1; min-height: 0; display: flex; background: #d8d8d8; }
.workspace { flex: 1; min-width: 0; display: flex; flex-direction: column; }
.formula { height: 43px; flex: none; display: flex; align-items: center; padding: 5px 1px 0 8px; }
.namebox { width: 149px; height: 24px; display: flex; align-items: center; border: 1px solid #999; border-radius: 4px; background: #e8e8e8; padding-right: 2px; }
.namebox input { flex: 1; text-align: center; font: 13px "Liberation Mono", monospace; padding-right: 6px; }
.fx { display: flex; align-items: center; gap: 11px; padding: 0 8px 0 46px; }
.fx em { font: italic 18px/20px "Liberation Serif", serif; color: #444; width: 15px; }
.cell-input { flex: 1; height: 24px; border: 1px solid #999; border-radius: 4px; background: #e8e8e8; padding-left: 11px; font-size: 15px; color: #000; }
.sheet-area { flex: 1; min-height: 0; display: flex; gap: 3px; }
.sheet { flex: 1; overflow: hidden; position: relative; background: #fff; }
table { table-layout: fixed; width: 1101px; border-spacing: 0; }
th, td { padding: 0; height: 54px; border: 0 solid #d0d0d0; border-width: 0 1px 1px 0; overflow: hidden; white-space: nowrap; }
th { font-weight: normal; font-size: 14px; color: #555; background: #d8d8d8; border-color: #b5b5b5; }
thead th { height: 23px; padding-top: 2px; border-bottom-color: #a5a5a5; }
thead .sel { background: #c4c4c4; color: #2c8a45; }
thead .corner { width: 34px; background: linear-gradient(135deg, transparent 50%, #b5b5b5 50%) 17px 7px / 11px 11px no-repeat #d8d8d8; }
tbody th { background: #c6c6c6; color: #2c8a45; border-right: 2px solid #43a843; border-bottom-color: #b0b0b0; }
td { font-size: 15px; color: #000; padding-left: 2px; text-align: left; }
td.num { font: 13px "Liberation Mono", monospace; padding-top: 2px; }
td.r { text-align: right; padding: 2px 1px 0 0; }
.data td:nth-child(2), .data td:nth-child(7) { border-right-color: #6aa544; }
.data td:nth-child(n+3):nth-child(-n+6) { border-bottom-color: #6aa544; }
tr:nth-child(n+2) td:nth-child(6) { background: #d8d8d8; }
tr:nth-child(n+6) td:nth-child(6) { border-bottom-color: #b0b0b0; }
.selection { position: absolute; left: 420px; top: 21px; width: 100px; bottom: -10px; border: 3px solid #43a843; }
.selection::after { content: ""; position: absolute; right: -4px; top: 0; width: 5px; height: 5px; background: #43a843; outline: 1px solid #fff; }
.vscroll { width: 14px; display: flex; flex-direction: column; align-items: center; background: #d0d0d0; }
.grip { width: 10px; height: 4px; border: 1px solid #aaa; border-width: 1px 0; }
.vscroll .grip { margin: 6px 2px 14px; outline: 7px solid #d8d8d8; }
.arrow { border: 3px solid transparent; width: 0; height: 0; }
.up { border-top: 0; border-bottom-color: #777; }
.down { border-bottom: 0; border-top-color: #777; }
.left { border-left: 0; border-right: 5px solid #777; }
.right { border-right: 0; border-left: 5px solid #777; }
.thumb { border: 1px solid #8c8c8c; border-radius: 7px; background: #e8e8e8; }
.vscroll .thumb { width: 14px; flex: 0 1 471px; margin: 8px 0 auto; }
.vscroll .down { margin-bottom: 8px; }
.sheetbar { height: 22px; flex: none; display: flex; align-items: center; }
.sheet-nav { width: 119px; display: flex; padding-left: 7px; }
.sheet-nav button { width: 26px; }
.sheet-nav svg { stroke: #bbb; }
.sheet-tab { width: 72px; height: 22px; padding-left: 3px; background: #fff; color: #43a843; font-weight: bold; border: 1px solid #c8c8c8; border-top: 0; }
.add { width: 26px; height: 20px; }
.hscroll { margin-left: auto; display: flex; align-items: center; gap: 6px; width: 464px; }
.vgrip { width: 3px; height: 10px; border: 1px solid #aaa; border-width: 0 1px; }
.track { width: 424px; height: 14px; background: #d0d0d0; display: flex; align-items: center; padding: 0 7px; }
.track .thumb { height: 14px; flex: 1; margin: 0 14px 0 8px; }

/* selection pane */
.pane { width: 261px; flex: none; background: #e4e4e4; padding: 0 12px 24px 13px; display: flex; flex-direction: column; }
.pane-title { height: 32px; display: flex; align-items: center; justify-content: space-between; margin: 0 -5px 0 -3px; }
.pane-title span { display: flex; align-items: center; gap: 4px; }
.pane-title button { width: 12px; height: 12px; }
.pane-title svg { stroke: #777; }
.pane h2 { margin: 0; font: 14px/32px "Noto Sans CJK SC", sans-serif; color: #2f9558; }
.objects { flex: 1; background: #fff; border: 1px solid #c8c8c8; border-radius: 3px; }
.order { display: flex; align-items: center; margin-top: 7px; }
.order button { width: 23px; height: 23px; background: #fff; border: 1px solid #d4d4d4; border-radius: 2px; margin-left: 10px; }
.order svg { fill: #bbb; stroke: none; }
.show { display: flex; gap: 11px; margin-top: 7px; }
.show button { width: 63px; height: 24px; background: #fff; border: 1px solid #d4d4d4; border-radius: 2px; color: #aaa; }

/* side tool strip */
.side { width: 36px; flex: none; display: flex; flex-direction: column; align-items: center; gap: 12px; padding: 11px 0 0; }
.side .grip { width: 16px; margin-bottom: 5px; }
.side button { width: 24px; height: 24px; flex: none; }
.side .on { background: #b0b0b0; border-radius: 3px; }
.side .faint { opacity: .2; }
.side hr { width: 30px; height: 1px; border: 0; margin: 0; background: #c0c0c0; flex: none; }
.mid { opacity: .7; }

/* status bar */
.status { height: 28px; flex: none; display: flex; align-items: center; color: #666; }
.st-mode { width: 47px; height: 24px; border-right: 1px solid #d0d0d0; }
.st-doc { width: 104px; height: 24px; gap: 5px; color: #4d8b3d; border-right: 1px solid #d0d0d0; }
.st-doc svg { stroke: #777; }
.calc { margin-left: 150px; display: flex; gap: 8px; font-size: 13px; }
.views { margin-left: auto; display: flex; align-items: center; gap: 2px; height: 24px; padding-right: 9px; border-right: 1px solid #d0d0d0; }
.views button { width: 24px; height: 24px; }
.views button:nth-child(4) { width: 28px; gap: 3px; }
.views .on { background: #bbb; border-radius: 3px; }
.zoom { display: flex; align-items: center; width: 263px; padding: 0 16px 0 11px; gap: 11px; color: #333; }
.pct { gap: 6px; }
.zoom input { flex: 1; appearance: none; height: 12px; background: linear-gradient(#555, #555) center / 100% 1px no-repeat; }
.zoom input::-webkit-slider-thumb { appearance: none; width: 12px; height: 12px; border: 1px solid #444; border-radius: 6px; background: #e8e8e8; }

/* floating toolbar */
.mini { position: absolute; left: 487px; top: 252px; width: 329px; height: 55px; background: #fff; border: 1px solid #c8c8c8; box-shadow: 1px 2px 3px #0002; display: flex; }
.mini-left { width: 210px; }
.mini .line { height: 27px; }
.mini .line:first-child { height: 26px; }
.mini .pick { height: 24px; border: 1px solid #aaa; background: #ececec; margin-left: 1px; }
.mini .pick + .pick { margin-left: -1px; }
.w-mf { width: 79px; }
.w-ms { width: 70px; }
.mini .ga { margin-left: 3px; }
.mini .bold { margin-left: -1px; }
.mini .split { width: 33px; }
.mini .split.on { background: linear-gradient(90deg, #c8c8c8 22px, #fff 22px); border: 1px solid #c8c8c8; border-radius: 3px; }
.mini-right { display: flex; border-left: 1px solid #e4e4e4; margin: 3px 0; padding-left: 8px; gap: 12px; }
.mini-right .big { padding-top: 1px; gap: 4px; }

/* context menu */
.context { position: absolute; left: 487px; top: 328px; width: 307px; padding: 1px 0; background: #fff; border: 1px solid #c4c4c4; box-shadow: 2px 2px 3px #0002; color: #444; }
.mi { width: 100%; height: 27px; display: flex; align-items: center; justify-content: flex-start; gap: 9px; padding: 0 18px 0 9px; }
.mi kbd { margin-left: auto; font: 13px/16px "Noto Sans", sans-serif; color: #808080; }
.context hr { height: 1px; margin: 1px 3px 1px 34px; border: 0; background: #e2e2e2; }
.insert { padding-right: 21px; gap: 3px; color: #000; }
.insert > button { gap: 9px; margin-right: auto; color: #444; }
.spin { display: flex; width: 76px; height: 23px; border: 1px solid #777; padding: 1px; }
.spin input { flex: 1; width: 20px; padding-left: 3px; color: #444; }
.spin span { display: flex; flex-direction: column; width: 15px; }
.spin button { flex: 1; border: 1px solid #b5b5b5; background: #ececec; }
.tri { border: 3px solid transparent; border-top-color: #000; border-bottom: 0; }
.tri.up { border-bottom: 3px solid #000; border-top: 0; }
.sub { margin-left: auto; margin-right: -8px; border: 3px solid transparent; border-left: 4px solid #888; border-right: 0; }
.pointer { position: absolute; left: 602px; top: 566px; filter: drop-shadow(2px 2px 2px #0006); }

/* site mark */
.mark { position: absolute; left: 1240px; top: 949px; display: flex; opacity: .85; pointer-events: none; }
.mark div { margin-left: -2px; display: flex; flex-direction: column; }
.mark strong { font: bold 21px/25px "Noto Sans CJK SC", sans-serif; color: #4a86d0; }
.mark b { font: bold 16px/18px "Liberation Sans", sans-serif; color: #53bd6d; }
```
